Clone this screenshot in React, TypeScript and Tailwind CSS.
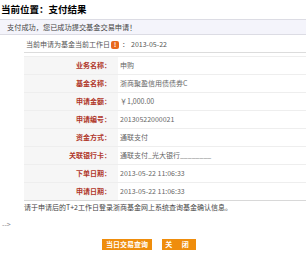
const rows: [string, string][] = [
  ['业务名称：', '申购'],
  ['基金名称：', '浙商聚盈信用债债券C'],
  ['申请金额：', '￥1,000.00'],
  ['申请编号：', '20130522000021'],
  ['资金方式：', '通联支付'],
  ['关联银行卡：', '通联支付_光大银行________'],
  ['下单日期：', '2013-05-22 11:06:33'],
  ['申请日期：', '2013-05-22 11:06:33'],
];

export default function App() {
  return (
    <div
      className="w-[306px] h-[264px] bg-white overflow-hidden text-[7px] text-[#555]"
      style={{ fontFamily: '"Noto Sans CJK SC", "Liberation Sans", sans-serif' }}
    >
      <h1 className="pt-[3px] pl-[1px] h-[19px] text-[9.5px] leading-[12px] font-bold text-black">
        当前位置：支付结果
      </h1>

      <div className="h-[16px] flex items-center pl-[7px] bg-[#f4f4fb] border-y border-[#dcdce4] text-[#444] text-[7.2px]">
        支付成功，您已成功提交基金交易申请！
      </div>

      <div className="ml-[24px] mt-[2px]">
        <div className="h-[16px] flex items-center border-b border-[#dcdcdc]">
          <span className="w-[86px] text-right">当前申请为基金当前工作日</span>
          <span className="ml-[1px] w-[8px] h-[8px] rounded-[2px] bg-[#e8681c] text-white text-[6px] leading-[8px] font-bold flex items-center justify-center">
            !
          </span>
          <span className="ml-[3px]">：</span>
          <span className="ml-[2px]">2013-05-22</span>
        </div>

        <div className="mt-[3px] border-b border-[#d8d8d8]">
          {rows.map(([label, value]) => (
            <div key={label} className="flex h-[18px] border-t border-[#eeeeee]">
              <div className="w-[94px] bg-[#f6f6f6] flex items-center justify-end pr-[7px] text-[#b0362a] font-bold">
                {label}
              </div>
              <div className="flex-1 flex items-center pl-[2px] text-[#666]">
                {value}
              </div>
            </div>
          ))}
        </div>

        <p className="mt-[1px] text-[#444] leading-[10px]">
          请于申请后的T+2工作日登录浙商基金网上系统查询基金确认信息。
        </p>
      </div>

      <div className="mt-[7px] pl-[2px] text-[#888] leading-[10px]">--&gt;</div>

      <div className="mt-[10px] flex gap-[10px] pl-[102px]">
        <button className="w-[50px] h-[11px] bg-[#ef8d0c] text-white font-bold text-[7px] leading-[11px]">
          当日交易查询
        </button>
        <button className="w-[34px] h-[11px] bg-[#ef8d0c] text-white font-bold text-[7px] leading-[11px] tracking-[4px]">
          关 闭
        </button>
      </div>
    </div>
  );
}
